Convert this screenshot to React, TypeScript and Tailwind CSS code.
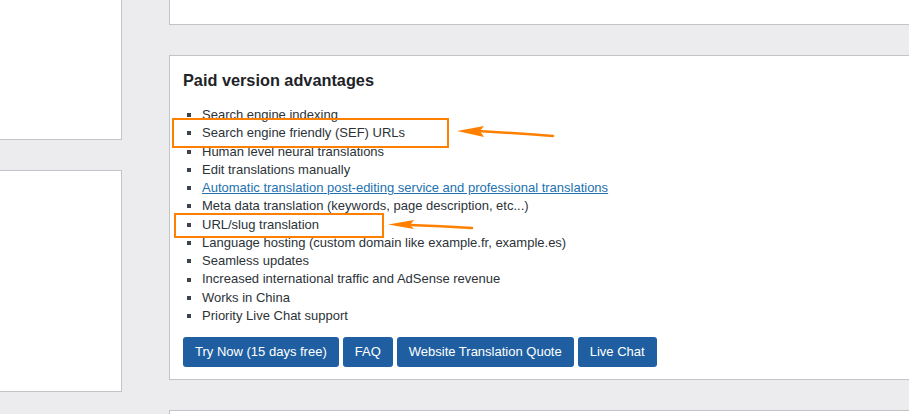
const features: { text: string; link?: boolean }[] = [
  { text: 'Search engine indexing' },
  { text: 'Search engine friendly (SEF) URLs' },
  { text: 'Human level neural translations' },
  { text: 'Edit translations manually' },
  { text: 'Automatic translation post-editing service and professional translations', link: true },
  { text: 'Meta data translation (keywords, page description, etc...)' },
  { text: 'URL/slug translation' },
  { text: 'Language hosting (custom domain like example.fr, example.es)' },
  { text: 'Seamless updates' },
  { text: 'Increased international traffic and AdSense revenue' },
  { text: 'Works in China' },
  { text: 'Priority Live Chat support' },
];

const buttons = ['Try Now (15 days free)', 'FAQ', 'Website Translation Quote', 'Live Chat'];

export default function App() {
  return (
    <div
      className="relative w-[909px] h-[414px] overflow-hidden bg-[#ececee] flex items-start"
      style={{ fontFamily: '"Liberation Sans", Arial, sans-serif' }}
    >
      {/* left column */}
      <div className="w-[122px] shrink-0 flex flex-col">
        <div className="h-[140px] shrink-0 bg-white border-r border-b border-[#c3c4c7]" />
        <div className="mt-[30px] h-[222px] shrink-0 bg-white border border-l-0 border-[#c3c4c7]" />
      </div>

      {/* right column */}
      <div className="ml-[47px] w-[800px] shrink-0 flex flex-col">
        <div className="h-[25px] shrink-0 bg-white border-l border-b border-[#c3c4c7]" />

        <div className="relative shrink-0 mt-[30px] h-[325px] bg-white border border-r-0 border-[#c3c4c7] pl-[13px] pt-[14px]">
          <h3 className="text-[16.3px] leading-[20px] font-bold text-[#1d2327]">Paid version advantages</h3>

          <ul className="mt-[16px] text-[13px] leading-[18.27px] text-[#2c3338]">
            {features.map((f) => (
              <li key={f.text} className="flex items-center">
                <span className="ml-[4px] mr-[11px] w-[4px] h-[4px] bg-[#3c434a] shrink-0" />
                {f.link ? (
                  <a href="#" className="text-[#2271b1] underline">{f.text}</a>
                ) : (
                  <span>{f.text}</span>
                )}
              </li>
            ))}
          </ul>

          <div className="mt-[12px] flex gap-[4px]">
            {buttons.map((b) => (
              <button
                key={b}
                className="h-[30px] px-[12px] rounded-[3px] bg-[#1f5fa1] text-white text-[13px] font-medium"
              >
                {b}
              </button>
            ))}
          </div>

          {/* highlight boxes */}
          <div className="absolute left-[2px] top-[62px] w-[277px] h-[30px] border-2 border-[#ff8000]" />
          <div className="absolute left-[4px] top-[157px] w-[210px] h-[25px] border-2 border-[#ff8000]" />
        </div>

        <div className="mt-[30px] h-[40px] shrink-0 bg-white border-l border-t border-[#c3c4c7]" />
      </div>

      {/* arrows */}
      <svg className="absolute inset-0 pointer-events-none" width="909" height="414" viewBox="0 0 909 414">
        <path d="M553 136 Q515 133 478 131" stroke="#ff8000" strokeWidth="2.5" fill="none" strokeLinecap="round" />
        <polygon points="457,131 484,126 480,131 484,137" fill="#ff8000" />
        <path d="M472 228 Q440 226 410 225" stroke="#ff8000" strokeWidth="2.5" fill="none" strokeLinecap="round" />
        <polygon points="388,224.5 414,220 410,225 414,229" fill="#ff8000" />
      </svg>
    </div>
  );
}
